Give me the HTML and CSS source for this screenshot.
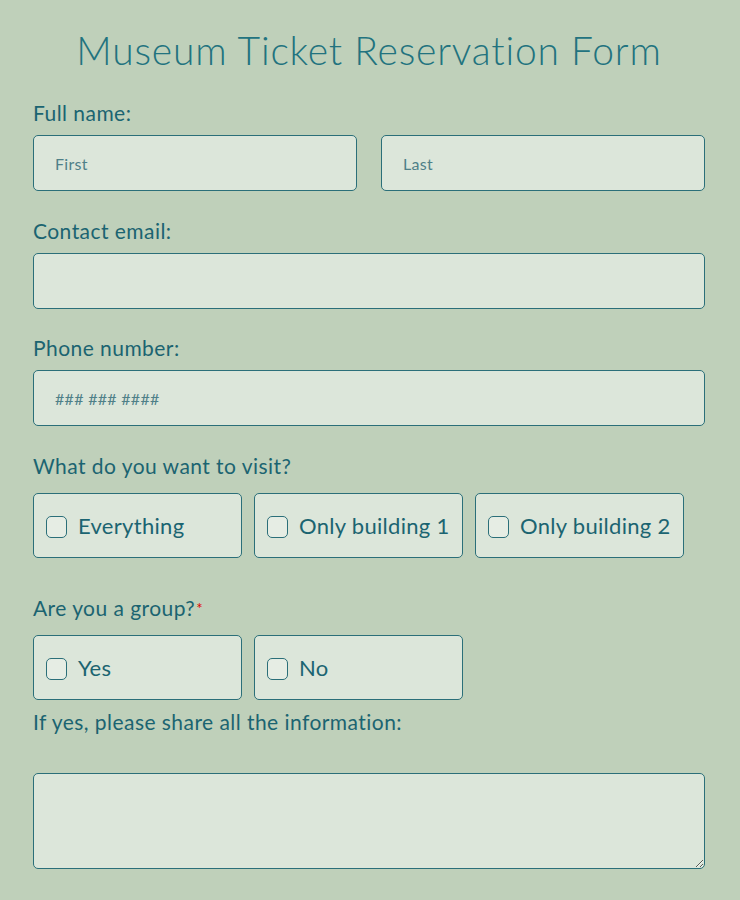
FILE: index.html
```html
<!DOCTYPE html>
<html>
<head>
<meta charset="utf-8">
<link rel="stylesheet" href="styles.css">
</head>
<body>
<form class="form">
  <h1 class="title">Museum Ticket Reservation Form</h1>

  <div class="field">
    <label class="label">Full name:</label>
    <div class="name-row">
      <input class="input" type="text" placeholder="First">
      <input class="input" type="text" placeholder="Last">
    </div>
  </div>

  <div class="field">
    <label class="label">Contact email:</label>
    <input class="input" type="email">
  </div>

  <div class="field field-phone">
    <label class="label">Phone number:</label>
    <input class="input" type="tel" placeholder="### ### ####">
  </div>

  <div class="field">
    <label class="label label-gap">What do you want to visit?</label>
    <div class="options">
      <label class="option"><input class="check" type="checkbox"><span>Everything</span></label>
      <label class="option"><input class="check" type="checkbox"><span>Only building 1</span></label>
      <label class="option"><input class="check" type="checkbox"><span>Only building 2</span></label>
    </div>
  </div>

  <div class="field field-group">
    <label class="label label-gap">Are you a group?<span class="req">*</span></label>
    <div class="options">
      <label class="option"><input class="check" type="checkbox"><span>Yes</span></label>
      <label class="option"><input class="check" type="checkbox"><span>No</span></label>
    </div>
  </div>

  <div class="field field-info">
    <label class="label label-info">If yes, please share all the information:</label>
    <textarea class="textarea"></textarea>
  </div>
</form>
</body>
</html>
```

FILE: styles.css
```css
html, body {
  margin: 0;
  padding: 0;
  background: #bfd0ba;
}

body {
  font-family: Lato, "Noto Sans", sans-serif;
  color: #1b6471;
}

.form {
  padding: 0 35px 0 33px;
}

.title {
  margin: 0;
  padding-top: 28px;
  height: 44px;
  line-height: 44px;
  text-align: center;
  font-size: 39px;
  font-weight: 300;
  color: #22737f;
  letter-spacing: 0.8px;
}

.field {
  display: flex;
  flex-direction: column;
  margin-top: 28px;
}

.field:first-of-type {
  margin-top: 29px;
}

.field-phone {
  margin-top: 27px;
}

.label {
  display: block;
  font-size: 21px;
  line-height: 24px;
  height: 24px;
  margin-bottom: 10px;
  font-weight: 400;
  letter-spacing: 0.45px;
}

.label-gap {
  margin-bottom: 15px;
}

.req {
  color: #e00000;
  font-size: 15px;
  vertical-align: top;
  margin-left: 1px;
}

.name-row {
  display: grid;
  grid-template-columns: 1fr 1fr;
  gap: 24px;
}

.input {
  box-sizing: border-box;
  height: 56px;
  width: 100%;
  margin: 0;
  padding: 0 21px;
  border: 1px solid #2b6f79;
  border-radius: 5px;
  background: #dce6da;
  font-family: Lato, "Noto Sans", sans-serif;
  font-size: 16px;
  color: #1b6471;
  outline: none;
}

.input::placeholder {
  color: #4f8088;
  letter-spacing: 0.3px;
}

.options {
  display: flex;
  gap: 12px;
}

.option {
  box-sizing: border-box;
  width: 209px;
  height: 65px;
  display: flex;
  align-items: center;
  gap: 11px;
  padding-left: 12px;
  border: 1px solid #2b6f79;
  border-radius: 5px;
  background: #dce6da;
  font-size: 22px;
  font-weight: 400;
  letter-spacing: 0.3px;
  color: #1b6471;
}

.check {
  appearance: none;
  -webkit-appearance: none;
  box-sizing: border-box;
  width: 21px;
  height: 22px;
  margin: 2px 0 0 0;
  border: 1px solid #2b6f79;
  border-radius: 5px;
  background: #e6ede4;
}

.field-group {
  margin-top: 38px;
}

.field-info {
  margin-top: 10px;
}

.label-info {
  margin-bottom: 39px;
}

.textarea {
  box-sizing: border-box;
  height: 96px;
  width: 100%;
  margin: 0;
  border: 1px solid #2b6f79;
  border-radius: 5px;
  background: #dce6da;
  outline: none;
  font-family: Lato, "Noto Sans", sans-serif;
}
```
